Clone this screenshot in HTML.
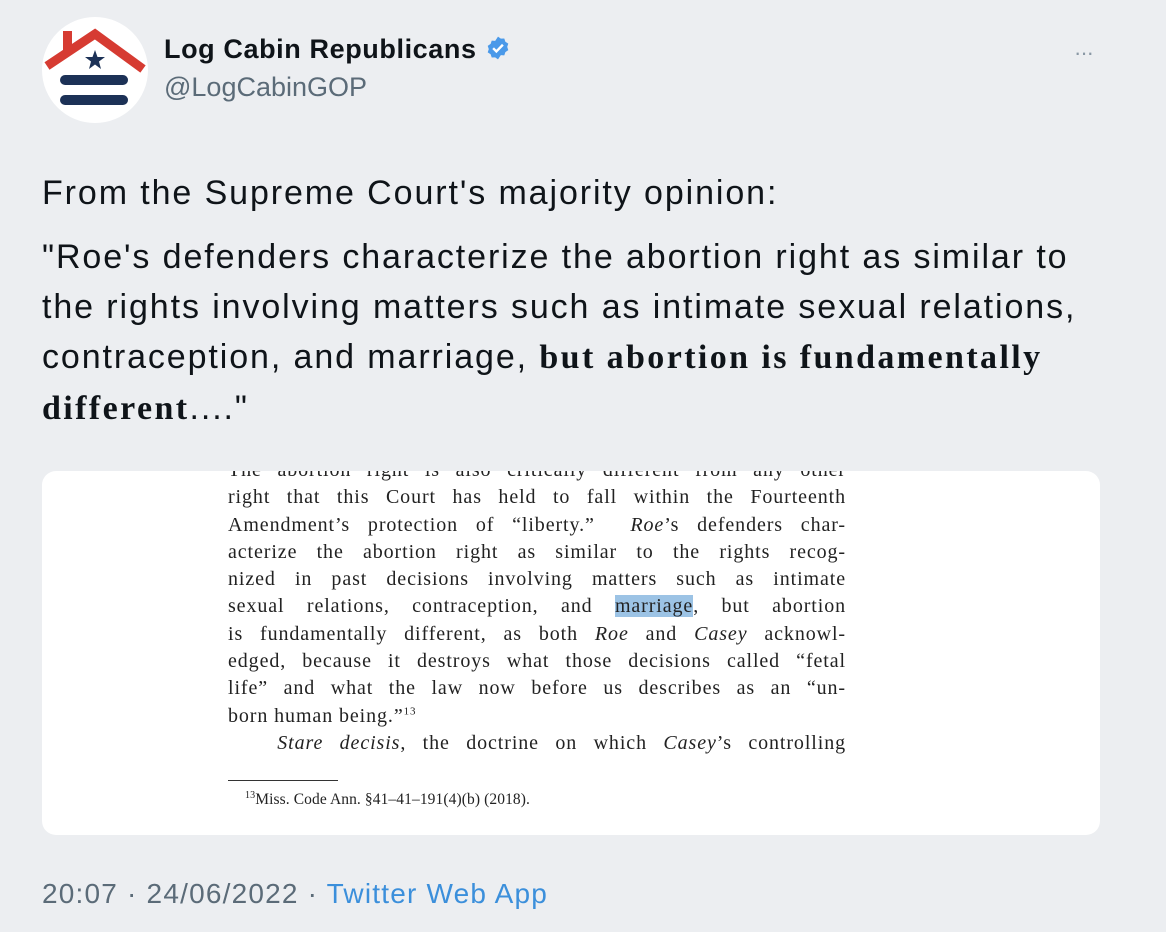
<!DOCTYPE html>
<html><head><meta charset="utf-8"><style>
body{margin:0;width:1166px;height:932px;background:#eceef1;font-family:"Liberation Sans",Arial,sans-serif;position:relative;overflow:hidden}
.av{position:absolute;left:42px;top:17px;width:106px;height:106px;border-radius:50%;background:#fff;overflow:hidden}
.name{position:absolute;left:164px;top:34px;font-size:27px;font-weight:bold;color:#0f1419;letter-spacing:0.6px}
.handle{position:absolute;left:164px;top:72px;font-size:27px;color:#5b6b78}
.dots{position:absolute;left:1074px;top:40px;color:#8a98a5;font-size:22px;letter-spacing:-1px}
.tw{position:absolute;left:42px;top:168px;font-size:34px;color:#0f1419;line-height:50px;width:1120px;letter-spacing:1.9px;white-space:nowrap}
.tw b{font-family:"Liberation Serif",serif;font-size:34px;letter-spacing:2.4px}
.img{position:absolute;left:42px;top:471px;width:1058px;height:364px;background:#fff;border-radius:14px;overflow:hidden}
.doc{position:absolute;left:186px;top:-14px;width:618px;font-family:"Liberation Serif",serif;font-size:20px;line-height:27.3px;color:#222;letter-spacing:0.9px}
.doc div{white-space:nowrap;text-align:justify;text-align-last:justify;height:27.3px}
.hl{background:#9cc3e5}
sup{line-height:0}
.fn{position:absolute;left:186px;top:309px;width:110px;border-top:1px solid #333}
.fnt{position:absolute;left:203px;top:320px;font-family:"Liberation Serif",serif;font-size:15.5px;color:#222;letter-spacing:0.1px}
.foot{position:absolute;left:42px;top:878px;font-size:28px;color:#5b6b78;letter-spacing:1.2px}
.foot span{color:#3b8fdb}
</style></head><body>
<div class="av"><svg width="106" height="106" viewBox="0 0 106 106">
<rect x="21" y="14" width="9" height="20" fill="#d63b32"/>
<path d="M5 49 L53 17 L101 52" fill="none" stroke="#d63b32" stroke-width="9" stroke-linejoin="miter"/>
<polygon points="53,33 55.5,40 63,40 57,44.5 59,52 53,47.5 47,52 49,44.5 43,40 50.5,40" fill="#1c3156"/>
<rect x="18" y="58" width="68" height="10" rx="5" fill="#1c3156"/>
<rect x="18" y="78" width="68" height="10" rx="5" fill="#1c3156"/>
</svg></div>
<div class="name">Log Cabin Republicans <svg width="26" height="26" viewBox="0 0 24 24" style="vertical-align:-3px"><path d="M12 1.5l2.6 1.9 3.2-.2 1 3 2.7 1.8-1 3 1 3-2.7 1.8-1 3-3.2-.2L12 22.5l-2.6-1.9-3.2.2-1-3-2.7-1.8 1-3-1-3 2.7-1.8 1-3 3.2.2z" fill="#4a99e9"/><path d="M7.5 12.2l3 3 6-6.2" fill="none" stroke="#fff" stroke-width="2.2"/></svg></div>
<div class="handle">@LogCabinGOP</div>
<div class="dots">···</div>
<div class="tw">From the Supreme Court's majority opinion:<div style="height:14px"></div>"Roe's defenders characterize the abortion right as similar to<br>the rights involving matters such as intimate sexual relations,<br>contraception, and marriage, <b>but abortion is fundamentally</b><br><b>different</b>...."</div>
<div class="img"><div class="doc">
<div>The abortion right is also critically different from any other</div>
<div>right that this Court has held to fall within the Fourteenth</div>
<div>Amendment’s protection of “liberty.” &nbsp;<i>Roe</i>’s defenders char-</div>
<div>acterize the abortion right as similar to the rights recog-</div>
<div>nized in past decisions involving matters such as intimate</div>
<div>sexual relations, contraception, and <span class="hl">marriage</span>, but abortion</div>
<div>is fundamentally different, as both <i>Roe</i> and <i>Casey</i> acknowl-</div>
<div>edged, because it destroys what those decisions called “fetal</div>
<div>life” and what the law now before us describes as an “un-</div>
<div style="text-align-last:left">born human being.”<sup style="font-size:11px">13</sup></div>
<div>&nbsp;&nbsp;&nbsp;<i>Stare decisis</i>, the doctrine on which <i>Casey</i>’s controlling</div>
</div>
<div class="fn"></div>
<div class="fnt"><sup style="font-size:10px">13</sup>Miss. Code Ann. §41–41–191(4)(b) (2018).</div>
</div>
<div class="foot">20:07 · 24/06/2022 · <span>Twitter Web App</span></div>
</body></html>
